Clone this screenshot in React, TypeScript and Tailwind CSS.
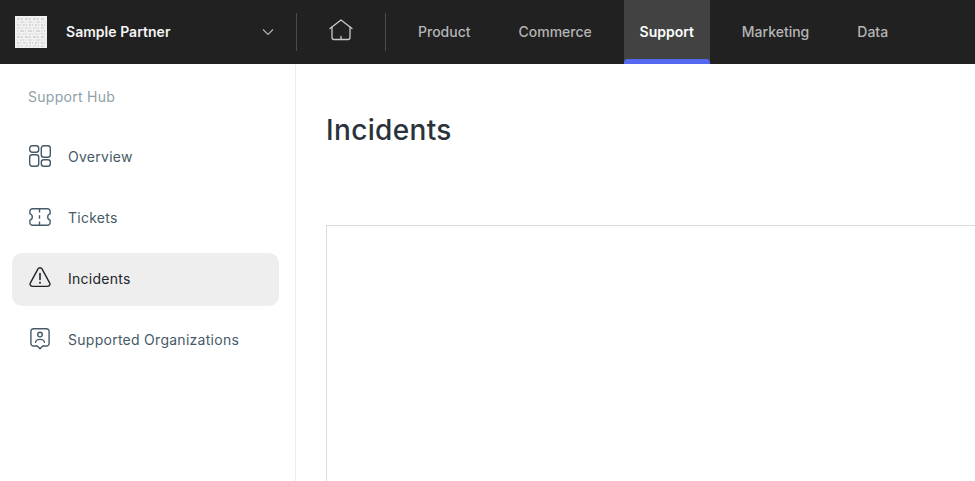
import React from 'react';

const tabs = ['Product', 'Commerce', 'Support', 'Marketing', 'Data'];

const LogoMark = () => (
  <svg className="w-8 h-8 shrink-0" viewBox="0 0 32 32">
    <rect width="32" height="32" fill="#f1f1f1" />
    {[3, 6, 9, 12, 15, 18, 21, 24, 27, 30].map((y, i) => (
      <line
        key={y}
        x1="2"
        x2="30"
        y1={y}
        y2={y}
        stroke={i % 2 ? '#dcdcdc' : '#d0d0d0'}
        strokeWidth="1.5"
        strokeDasharray={i % 3 === 0 ? '3 1 2 2' : i % 3 === 1 ? '1 2 4 1' : '2 1 1 2'}
      />
    ))}
  </svg>
);

const HomeIcon = () => (
  <svg width="24" height="22" viewBox="0 0 24 22" fill="none" stroke="#c9c9c9" strokeWidth="1.3" strokeLinecap="round" strokeLinejoin="round">
    <path d="M1 9.5 12 1l11 8.5" />
    <path d="M3 8v10.500A2 2 0 0 0 5 20.500h14a2 2 0 0 0 2-2V8" />
    <path d="M12 17.500v3" />
  </svg>
);

const OverviewIcon = () => (
  <svg width="22" height="22" viewBox="0 0 22 22" fill="none" stroke="currentColor" strokeWidth="1.4">
    <rect x="0.7" y="0.7" width="9" height="6.5" rx="2.5" />
    <rect x="12.3" y="0.7" width="9" height="11.5" rx="2.5" />
    <rect x="0.7" y="9.8" width="9" height="11.5" rx="2.5" />
    <rect x="12.3" y="14.8" width="9" height="6.5" rx="2.5" />
  </svg>
);

const TicketIcon = () => (
  <svg width="22" height="18" viewBox="0 0 22 18" fill="none" stroke="currentColor" strokeWidth="1.4" strokeLinejoin="round">
    <path d="M3.5 0.8h15a2.5 2.5 0 0 1 2.6 2.5v2.6a3.2 3.2 0 0 0 0 6.200v2.600a2.500 2.500 0 0 1-2.600 2.500h-15a2.500 2.500 0 0 1-2.600-2.500v-2.600a3.200 3.200 0 0 0 0-6.200V3.300A2.500 2.500 0 0 1 3.500 0.800Z" />
    <path d="M10.500 0.800v3.600M10.500 7.200v3.600M10.500 13.600v3.600" />
  </svg>
);

const AlertIcon = () => (
  <svg width="22" height="21" viewBox="0 0 22 21" fill="none" stroke="currentColor" strokeWidth="1.4" strokeLinecap="round" strokeLinejoin="round">
    <path d="M9 1.900a2.300 2.300 0 0 1 4 0l7.600 13.900a2.400 2.400 0 0 1-2.100 3.600H3.500a2.400 2.400 0 0 1-2.100-3.600Z" />
    <path d="M11 6.500v6" strokeWidth="1.6" />
    <path d="M11 15.600v.2" strokeWidth="1.9" />
  </svg>
);

const OrgIcon = () => (
  <svg width="20" height="22" viewBox="0 0 20 22" fill="none" stroke="currentColor" strokeWidth="1.4" strokeLinecap="round" strokeLinejoin="round">
    <path d="M3.500 0.800h13a2.600 2.600 0 0 1 2.600 2.600v12a2.600 2.600 0 0 1-2.600 2.600h-3.800L10 20.800 7.300 18H3.500a2.600 2.600 0 0 1-2.600-2.600V3.400A2.600 2.600 0 0 1 3.500 0.800Z" />
    <circle cx="10" cy="6.600" r="2.300" />
    <path d="M5.500 14.400c.4-2 2.200-3 4.500-3s4.100 1 4.500 3" />
  </svg>
);

const sideItems = [
  { label: 'Overview', icon: <OverviewIcon /> },
  { label: 'Tickets', icon: <TicketIcon /> },
  { label: 'Incidents', icon: <AlertIcon />, active: true },
  { label: 'Supported Organizations', icon: <OrgIcon /> },
];

export default function App() {
  return (
    <div className="h-[481px] w-[975px] overflow-hidden flex flex-col bg-white font-['Inter',sans-serif]">
      <header className="h-16 shrink-0 flex items-center bg-[#212121]">
        <div className="w-[296px] shrink-0 flex items-center pl-[15px] pr-[22px]">
          <LogoMark />
          <span className="ml-[19px] text-sm font-semibold tracking-[0.03px] text-[#f5f5f5]">Sample Partner</span>
          <svg className="ml-auto" width="12" height="8" viewBox="0 0 12 8" fill="none" stroke="#b0b0b0" strokeWidth="1.2">
            <path d="M1 1.500 6 6.500l5-5" />
          </svg>
        </div>
        <div className="w-[90px] h-[38px] shrink-0 flex items-center justify-center border-x border-[#454c54]">
          <span className="mb-1 flex">
            <HomeIcon />
          </span>
        </div>
        <nav className="h-full flex gap-4 pl-4">
          {tabs.map((tab) =>
            tab === 'Support' ? (
              <a key={tab} className="relative w-[86px] h-full flex items-center justify-center bg-[#424242] text-sm font-semibold text-white">
                {tab}
                <span className="absolute left-0 right-0 bottom-0 h-[5px] rounded-t-[4px] bg-[#5468f0]"></span>
              </a>
            ) : (
              <a key={tab} className="h-full flex items-center px-4 text-sm font-medium text-[#b5b5b5]">
                {tab}
              </a>
            )
          )}
        </nav>
      </header>

      <div className="flex-1 flex min-h-0">
        <aside className="w-[296px] shrink-0 border-r border-[#ececec] pl-3 pr-4 pt-[24px]">
          <p className="pl-4 text-sm leading-[18px] tracking-[0.28px] text-[#8f9fa8]">Support Hub</p>
          <ul className="mt-[25px] flex flex-col gap-2">
            {sideItems.map((item) => (
              <li
                key={item.label}
                className={
                  item.active
                    ? 'h-[53px] flex items-center pl-4 rounded-[10px] bg-[#eeeeee] text-[#1f2529]'
                    : 'h-[53px] flex items-center pl-4 rounded-[10px] text-[#465a67]'
                }
              >
                <span className="w-6 mb-1 flex justify-center">{item.icon}</span>
                <span className="ml-[16px] mb-0.5 text-sm tracking-[0.27px]">{item.label}</span>
              </li>
            ))}
          </ul>
        </aside>

        <main className="flex-1 min-w-0 pl-[30px] pt-[47px]">
          <h1 className="text-[28px] leading-[38px] font-medium tracking-[0.35px] text-[#2a3339]">Incidents</h1>
          <div className="mt-[76px] h-[300px] border-l border-t border-[#dcdcdc]"></div>
        </main>
      </div>
    </div>
  );
}
